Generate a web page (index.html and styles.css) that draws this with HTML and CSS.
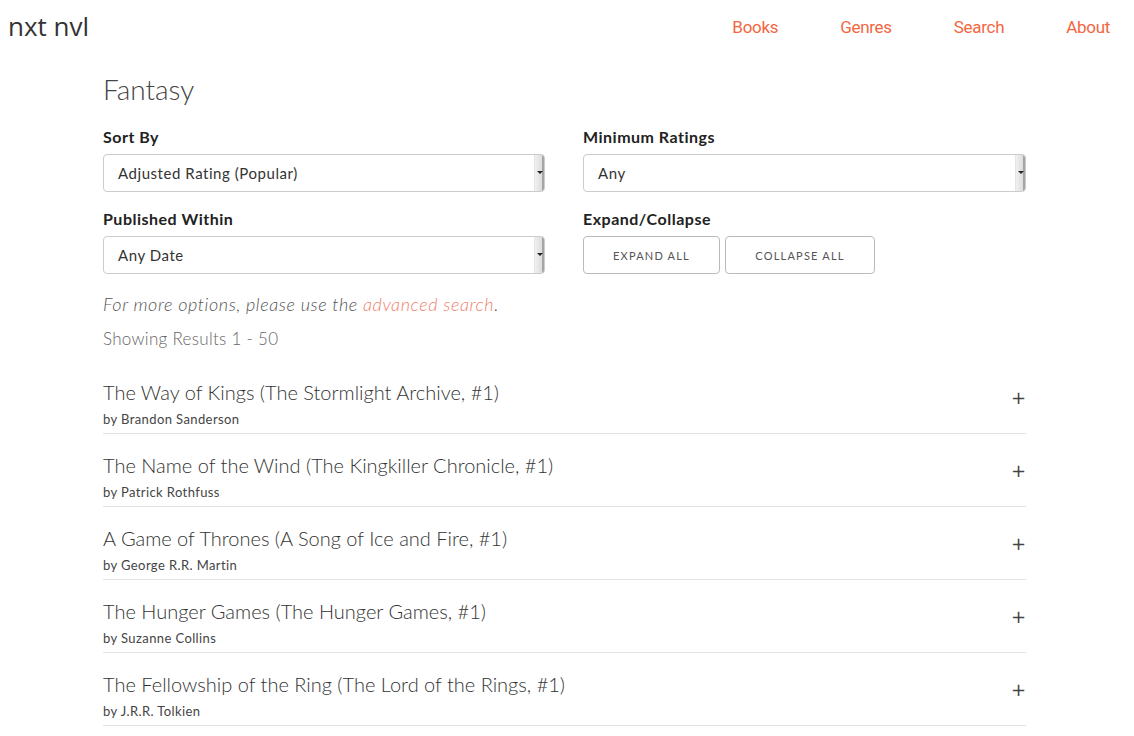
FILE: index.html
```html
<!DOCTYPE html>
<html>
<head>
<meta charset="utf-8">
<link rel="stylesheet" href="styles.css">
</head>
<body>
<header class="topbar">
  <div class="logo">nxt nvl</div>
  <nav class="nav">
    <a href="#">Books</a>
    <a href="#">Genres</a>
    <a href="#">Search</a>
    <a href="#">About</a>
  </nav>
</header>
<main class="container">
  <h1 class="genre">Fantasy</h1>
  <div class="filters">
    <div class="field">
      <label>Sort By</label>
      <div class="select"><span>Adjusted Rating (Popular)</span><i class="arrow"></i></div>
    </div>
    <div class="field">
      <label>Minimum Ratings</label>
      <div class="select"><span>Any</span><i class="arrow"></i></div>
    </div>
    <div class="field">
      <label>Published Within</label>
      <div class="select"><span>Any Date</span><i class="arrow"></i></div>
    </div>
    <div class="field">
      <label>Expand/Collapse</label>
      <div class="btns">
        <button class="btn expand">EXPAND ALL</button>
        <button class="btn collapse">COLLAPSE ALL</button>
      </div>
    </div>
  </div>
  <p class="hint">For more options, please use the <a href="#">advanced search</a>.</p>
  <p class="count">Showing Results 1 - 50</p>
  <ul class="books">
    <li class="book"><div><div class="title">The Way of Kings (The Stormlight Archive, #1)</div><div class="author">by Brandon Sanderson</div></div><span class="plus">+</span></li>
    <li class="book"><div><div class="title">The Name of the Wind (The Kingkiller Chronicle, #1)</div><div class="author">by Patrick Rothfuss</div></div><span class="plus">+</span></li>
    <li class="book"><div><div class="title">A Game of Thrones (A Song of Ice and Fire, #1)</div><div class="author">by George R.R. Martin</div></div><span class="plus">+</span></li>
    <li class="book"><div><div class="title">The Hunger Games (The Hunger Games, #1)</div><div class="author">by Suzanne Collins</div></div><span class="plus">+</span></li>
    <li class="book"><div><div class="title">The Fellowship of the Ring (The Lord of the Rings, #1)</div><div class="author">by J.R.R. Tolkien</div></div><span class="plus">+</span></li>
  </ul>
</main>
</body>
</html>
```
FILE: styles.css
```css
* { box-sizing: border-box; }
body {
  margin: 0;
  font-family: "Lato", "Liberation Sans", sans-serif;
  color: #333;
  background: #fff;
  overflow: hidden;
}
.topbar {
  display: flex;
  justify-content: space-between;
  align-items: center;
  height: 54px;
  padding: 0 0 0 8px;
}
.logo {
  font-family: "Open Sans", sans-serif;
  font-size: 26px;
  color: #333;
  margin-top: -2px;
}
.nav {
  display: flex;
  padding-right: 24px;
}
.nav a {
  font-family: "Roboto", sans-serif;
  color: #f3663f;
  text-decoration: none;
  font-size: 17px;
  letter-spacing: -0.3px;
  margin-left: 62px;
  margin-top: 0;
}
.container {
  width: 923px;
  margin: 0 0 0 103px;
}
.genre {
  font-weight: 300;
  font-size: 28px;
  color: #444;
  margin: 18px 0 0;
  line-height: 34px;
}
.filters {
  display: grid;
  grid-template-columns: 442px 443px;
  column-gap: 38px;
  row-gap: 16px;
  margin-top: 20px;
}
.field label {
  display: block;
  font-weight: 700;
  font-size: 16px;
  letter-spacing: 0.5px;
  color: #222;
  line-height: 22px;
  margin-bottom: 6px;
}
.select {
  display: flex;
  align-items: center;
  justify-content: space-between;
  height: 38px;
  border: 1px solid #ccc;
  border-radius: 4px;
  padding-left: 14px;
  font-size: 15px;
  letter-spacing: 0.55px;
  color: #333;
  overflow: hidden;
}
.arrow {
  width: 10px;
  height: 100%;
  background: linear-gradient(to right, #f0f0f0, #dcdcdc);
  border-left: 1px solid #e4e4e4;
  border-right: 2px solid #a5a5a5;
  position: relative;
}
.arrow::after {
  content: "";
  position: absolute;
  left: 2px;
  top: 16px;
  border-left: 3px solid transparent;
  border-right: 3px solid transparent;
  border-top: 3px solid #222;
}
.btns {
  display: flex;
  gap: 5px;
}
.btn {
  height: 38px;
  background: #fff;
  border: 1px solid #bbb;
  border-radius: 4px;
  font-family: "Lato", sans-serif;
  font-size: 11px;
  letter-spacing: 1.2px;
  color: #555;
  cursor: pointer;
}
.btn.expand { width: 137px; }
.btn.collapse { width: 150px; }
.hint {
  font-style: italic;
  font-weight: 300;
  font-size: 18px;
  letter-spacing: 0.6px;
  color: #555;
  margin: 18px 0 0;
  line-height: 24px;
}
.hint a { color: #f0806a; text-decoration: none; }
.count {
  font-weight: 300;
  font-size: 17px;
  letter-spacing: 0.3px;
  color: #666;
  margin: 11px 0 0;
  line-height: 24px;
}
.books {
  list-style: none;
  margin: 10px 0 0;
  padding: 0;
}
.book {
  display: flex;
  justify-content: space-between;
  align-items: flex-start;
  border-bottom: 1px solid #e2e2e2;
  padding: 17px 0 4px;
}
.title {
  font-weight: 300;
  font-size: 20px;
  color: #333;
  line-height: 28px;
}
.author {
  font-size: 13px;
  letter-spacing: 0.4px;
  color: #444;
  line-height: 20px;
  margin-top: 3px;
}
.plus {
  font-family: "DejaVu Sans", sans-serif;
  font-size: 18px;
  line-height: 20px;
  color: #444;
  margin-top: 10px;
  margin-right: 0;
}
```
